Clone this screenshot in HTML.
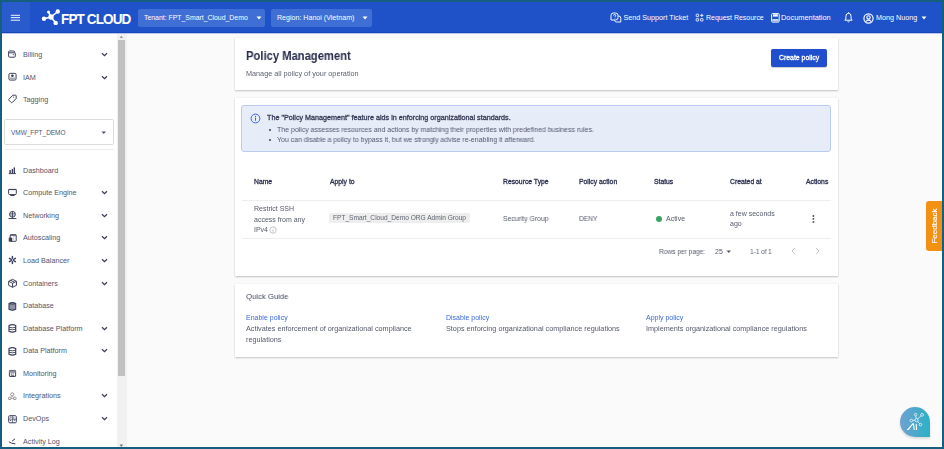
<!DOCTYPE html>
<html><head><meta charset="utf-8">
<style>
*{margin:0;padding:0;box-sizing:border-box}
html,body{width:944px;height:449px;overflow:hidden;background:#165e80;font-family:"Liberation Sans",sans-serif}
.a{position:absolute;white-space:nowrap;line-height:normal}
#frame{position:absolute;left:2px;top:2px;width:940px;height:445px;background:#fafafa;overflow:hidden}
#hdr{position:absolute;left:0;top:0;width:940px;height:31px;background:#1f52c8;border-bottom:1px solid #1746b8}
#burger{position:absolute;left:0;top:0;width:28px;height:30px;background:#2a5bcc}
.hl{position:absolute;left:9px;width:9px;height:1px;background:#e8eefc}
.dd{position:absolute;top:6.5px;height:18px;background:#3f6ed5;border-radius:2px}
.ht{color:#fff;font-size:7.2px}
#side{position:absolute;left:0;top:31px;width:115px;height:414px;background:#fff}
.si{position:absolute;left:21.4px;font-size:7.6px;color:#50556c;white-space:nowrap;transform:scaleX(0.947);transform-origin:0 0}
.ic{position:absolute;left:6px}
.chev{position:absolute;left:99px}
.card{position:absolute;left:233px;width:603px;background:#fff;box-shadow:0 1px 1.5px rgba(0,0,0,.2),0 0 2px rgba(0,0,0,.07)}
.th{position:absolute;font-size:6.8px;font-weight:normal;-webkit-text-stroke:0.3px #2b3050;color:#2b3050;white-space:nowrap}
.td{position:absolute;font-size:7px;color:#555a6a;white-space:nowrap;line-height:10.7px}
.card~.a,.th,.td{will-change:transform}</style></head><body>
<div id="frame">
  <div id="hdr">
    <div id="burger">
      <svg class="a" style="left:0;top:0" width="28" height="30"><g fill="#e8eefc"><rect x="8.8" y="12.8" width="9.2" height="1.05"/><rect x="8.8" y="15.1" width="9.2" height="1.05"/><rect x="8.8" y="17.7" width="9.2" height="1.05"/></g></svg>
    </div>
    <!-- logo -->
    <svg class="a" style="left:39px;top:6.2px" width="20" height="17" viewBox="0 0 20 17">
      <g stroke="#fff" stroke-width="1.6" fill="none">
        <line x1="10" y1="9" x2="3" y2="10.8"/>
        <line x1="10" y1="9" x2="7.5" y2="4"/>
        <line x1="10" y1="9" x2="16.8" y2="3.5"/>
        <line x1="10" y1="9" x2="14.7" y2="15"/>
      </g>
      <g fill="#fff">
        <circle cx="10" cy="9" r="2.7"/>
        <circle cx="3" cy="10.8" r="2.2"/>
        <circle cx="7.5" cy="4" r="1.5"/>
        <circle cx="16.8" cy="3.5" r="2.2"/>
        <circle cx="14.7" cy="15" r="2.2"/>
      </g>
    </svg>
    <div class="a" style="left:58.6px;top:8.7px;font-size:14px;font-weight:bold;color:#fff;letter-spacing:-0.9px;transform:scaleX(0.965);transform-origin:0 0">FPT CLOUD</div>
    <div class="dd" style="left:136px;width:127px"></div>
    <div class="a ht" style="left:141.8px;top:11px;transform:scaleX(0.958);transform-origin:0 0">Tenant: FPT_Smart_Cloud_Demo</div>
    <svg class="a" style="left:254px;top:14px" width="6" height="4"><path d="M0.5 0.5h5l-2.5 3z" fill="#fff"/></svg>
    <div class="dd" style="left:269px;width:100.5px"></div>
    <div class="a ht" style="left:274.5px;top:11px;transform:scaleX(0.985);transform-origin:0 0">Region: Hanoi (Vietnam)</div>
    <svg class="a" style="left:360px;top:14px" width="6" height="4"><path d="M0.5 0.5h5l-2.5 3z" fill="#fff"/></svg>

    <!-- right header -->
    <svg class="a" style="left:608px;top:10px" width="12" height="11" viewBox="0 0 12 11" fill="none" stroke="#fff" stroke-width="0.95">
      <path d="M3.3 1h2.3a2.4 2.4 0 0 1 2.4 2.4v2.2a2.4 2.4 0 0 1-2.4 2.4h-4.6v-4.6a2.4 2.4 0 0 1 2.3-2.4z"/>
      <path d="M8.3 3.9a2.4 2.4 0 0 1 2.5 2.4v3.7h-4.2a2.4 2.4 0 0 1-2.2-1.7"/>
      <path d="M3.5 3.5a1.1 1.1 0 1 1 1.5 1v0.8"/><circle cx="5" cy="6.6" r="0.35" fill="#fff" stroke="none"/>
    </svg>
    <div class="a ht" style="left:621.5px;top:11px">Send Support Ticket</div>
    <svg class="a" style="left:693px;top:11px" width="9" height="9" viewBox="0 0 9 9" fill="none" stroke="#fff" stroke-width="0.9">
      <rect x="1.2" y="1.2" width="2.4" height="2.4" rx="0.2" stroke-width="0.8"/><rect x="1.2" y="5.6" width="2.4" height="2.4" rx="0.2" stroke-width="0.8"/><rect x="5.6" y="5.6" width="2.4" height="2.4" rx="0.2" stroke-width="0.8"/>
      <path d="M6.8 0.8v3.2M5.2 2.4h3.2" stroke-width="0.85"/>
    </svg>
    <div class="a ht" style="left:704px;top:11px;transform:scaleX(0.97);transform-origin:0 0">Request Resource</div>
    <svg class="a" style="left:769px;top:11px" width="9" height="10" viewBox="0 0 9 10" fill="none" stroke="#fff" stroke-width="1">
      <rect x="0.6" y="0.6" width="7.6" height="8.5" rx="1"/>
      <rect x="2" y="1.3" width="4.8" height="2.3" fill="#fff" stroke="none"/>
      <rect x="1.3" y="6" width="6.2" height="2.3" fill="rgba(255,255,255,0.75)" stroke="none"/>
    </svg>
    <div class="a ht" style="left:779px;top:11px;font-size:7.4px">Documentation</div>
    <svg class="a" style="left:841.5px;top:10px" width="9" height="11" viewBox="0 0 9 11" fill="none" stroke="#fff" stroke-width="1">
      <path d="M4.5 1.3q-2.6 0-2.6 3v2.6l-1.1 1.3h7.4l-1.1-1.3v-2.6q0-3-2.6-3z"/><path d="M3.5 9.3q1 1.2 2 0"/><path d="M4.5 0.3v1"/>
    </svg>
    <svg class="a" style="left:861px;top:10.5px" width="11" height="11" viewBox="0 0 11 11" fill="none" stroke="#fff" stroke-width="1">
      <circle cx="5.5" cy="5.5" r="4.6" stroke-width="1.15"/><circle cx="5.5" cy="4.4" r="1.7" stroke-width="1.1"/><path d="M2.6 8.6q2.9-3 5.8 0" stroke-width="1.1"/>
    </svg>
    <div class="a ht" style="left:874px;top:11px">Mong Nuong</div>
    <svg class="a" style="left:918.5px;top:14px" width="6" height="4"><path d="M0.5 0.5h5l-2.5 3z" fill="#fff"/></svg>
  </div>

  <div id="side">
<div class="si" style="top:17.2px">Billing</div>
<svg class="ic" style="top:16.7px" width="10" height="10" viewBox="0 0 10 10"><path d="M1.6 1h4a1 1 0 0 1 1 1v0.6h0.1a0.7 0.7 0 0 1 0.6 0.7v2.9a1 1 0 0 1-1 1h-4.7a1 1 0 0 1-1-1v-4.2a1 1 0 0 1 1-1z" stroke="#3a3f5a" fill="none" stroke-width="1" stroke-width="1.1"/><path d="M0.8 2.8h6" stroke="#3a3f5a" fill="none" stroke-width="1" stroke-width="1.1"/><circle cx="5.3" cy="4.6" r="0.6" fill="#3a3f5a"/></svg>
<svg class="chev" style="top:19.2px" width="7" height="5" viewBox="0 0 7 5"><path d="M1 1.2l2.5 2.4l2.5-2.4" fill="none" stroke="#3a3f5a" stroke-width="1.3"/></svg>
<div class="si" style="top:39.5px">IAM</div>
<svg class="ic" style="top:39.0px" width="10" height="10" viewBox="0 0 10 10"><rect x="0.95" y="1.35" width="7.1" height="6.7" rx="1.2" stroke="#3a3f5a" fill="none" stroke-width="1" stroke-width="1.1"/><circle cx="4.4" cy="3.8" r="1.3" fill="#3a3f5a"/><rect x="2" y="5.6" width="5" height="1.3" fill="#9a9db0"/></svg>
<svg class="chev" style="top:41.5px" width="7" height="5" viewBox="0 0 7 5"><path d="M1 1.2l2.5 2.4l2.5-2.4" fill="none" stroke="#3a3f5a" stroke-width="1.3"/></svg>
<div class="si" style="top:61.8px">Tagging</div>
<svg class="ic" style="top:61.3px" width="10" height="10" viewBox="0 0 10 10"><path d="M0.9 5.2l4-4h2.7a0.6 0.6 0 0 1 0.6 0.6v2.7l-4 4a0.7 0.7 0 0 1-1 0l-2.3-2.3a0.7 0.7 0 0 1 0-1z" stroke="#3a3f5a" fill="none" stroke-width="1" stroke-width="0.95" stroke-linejoin="round"/><circle cx="5.6" cy="3" r="0.55" fill="#3a3f5a"/></svg>
<div class="a" style="left:2.3px;top:86.3px;width:109.3px;height:26px;border:1px solid #dcdcdc;border-radius:2px;background:#fff"></div>
<div class="si" style="left:9.2px;top:95.2px;transform:scaleX(0.85);transform-origin:0 0">VMW_FPT_DEMO</div>
<svg class="a" style="left:98.6px;top:97.8px" width="6" height="4"><path d="M0.5 0.5h4.5l-2.25 2.5z" fill="#50556c"/></svg>
<div class="a" style="left:2.7px;top:115.6px;width:109px;height:1px;background:#ececec"></div>
<div class="si" style="top:132.6px">Dashboard</div>
<svg class="ic" style="top:132.1px" width="10" height="10" viewBox="0 0 10 10"><rect x="1.4" y="5" width="1.4" height="3.1" fill="#3a3f5a"/><rect x="3.7" y="3.9" width="1.3" height="4.2" fill="#3a3f5a"/><rect x="5.6" y="2.4" width="1.4" height="5.7" fill="#3a3f5a"/><rect x="0.75" y="8.1" width="7.1" height="1" fill="#3a3f5a"/></svg>
<div class="si" style="top:155.2px">Compute Engine</div>
<svg class="ic" style="top:154.7px" width="10" height="10" viewBox="0 0 10 10"><path d="M1.3 1.4h6.3a0.7 0.7 0 0 1 0.7 0.7v3.3a1.2 1.2 0 0 1-1.2 1.2h-5.3a1.2 1.2 0 0 1-1.2-1.2v-3.3a0.7 0.7 0 0 1 0.7-0.7z" stroke="#3a3f5a" fill="none" stroke-width="1" stroke-width="1.2"/><path d="M0.6 1.6h7.7" stroke="#3a3f5a" fill="none" stroke-width="1" stroke-width="1.6"/><path d="M2.4 7.5h4.1" stroke="#3a3f5a" fill="none" stroke-width="1" stroke-width="1.1"/><circle cx="4.45" cy="7.2" r="0.7" fill="#3a3f5a"/></svg>
<svg class="chev" style="top:157.2px" width="7" height="5" viewBox="0 0 7 5"><path d="M1 1.2l2.5 2.4l2.5-2.4" fill="none" stroke="#3a3f5a" stroke-width="1.3"/></svg>
<div class="si" style="top:177.8px">Networking</div>
<svg class="ic" style="top:177.3px" width="10" height="10" viewBox="0 0 10 10"><circle cx="4.45" cy="4.3" r="2.9" stroke="#3a3f5a" fill="none" stroke-width="1" stroke-width="1.1"/><path d="M1.8 3.6h5.3M1.8 5h5.3" stroke="#3a3f5a" stroke-width="0.6" fill="none"/><path d="M4.45 1.4v5.8" stroke="#3a3f5a" stroke-width="0.9" fill="none"/><path d="M4.45 7.2v1.3M0.5 8.55h7.9" stroke="#3a3f5a" fill="none" stroke-width="1" stroke-width="1"/></svg>
<svg class="chev" style="top:179.8px" width="7" height="5" viewBox="0 0 7 5"><path d="M1 1.2l2.5 2.4l2.5-2.4" fill="none" stroke="#3a3f5a" stroke-width="1.3"/></svg>
<div class="si" style="top:200.3px">Autoscaling</div>
<svg class="ic" style="top:199.8px" width="10" height="10" viewBox="0 0 10 10"><rect x="2.2" y="1.8" width="6" height="6.5" rx="0.5" stroke="#3a3f5a" fill="none" stroke-width="1"/><path d="M2.2 2.1h6" stroke="#3a3f5a" fill="none" stroke-width="1" stroke-width="1.3"/><rect x="0.75" y="4.6" width="3.5" height="4" fill="#3a3f5a"/><path d="M5 3.6h2M5.7 4.6v2.4" stroke="#b8bac6" stroke-width="0.8"/></svg>
<svg class="chev" style="top:202.3px" width="7" height="5" viewBox="0 0 7 5"><path d="M1 1.2l2.5 2.4l2.5-2.4" fill="none" stroke="#3a3f5a" stroke-width="1.3"/></svg>
<div class="si" style="top:222.9px">Load Balancer</div>
<svg class="ic" style="top:222.4px" width="10" height="10" viewBox="0 0 10 10"><g stroke="#3a3f5a" stroke-width="1.5" stroke-linecap="round"><path d="M4.4 1.6v1.5M4.4 6.9v1.5M1.45 3.3l1.3 0.75M6.05 5.95l1.3 0.75M1.45 6.7l1.3-0.75M6.05 4.05l1.3-0.75"/></g><circle cx="4.4" cy="5" r="1.2" stroke="#3a3f5a" fill="none" stroke-width="1" stroke-width="0.8"/></svg>
<svg class="chev" style="top:224.9px" width="7" height="5" viewBox="0 0 7 5"><path d="M1 1.2l2.5 2.4l2.5-2.4" fill="none" stroke="#3a3f5a" stroke-width="1.3"/></svg>
<div class="si" style="top:245.5px">Containers</div>
<svg class="ic" style="top:245.0px" width="10" height="10" viewBox="0 0 10 10"><path d="M4.55 1.3l3.9 2v4l-3.9 2l-3.9-2v-4z" stroke="#3a3f5a" fill="none" stroke-width="1" stroke-width="1.1" stroke-linejoin="round"/><path d="M0.9 3.4l3.65 1.9l3.65-1.9M4.55 5.3v3.8M2.7 2.3l3.6 1.9" stroke="#3a3f5a" fill="none" stroke-width="1" stroke-width="0.9"/></svg>
<svg class="chev" style="top:247.5px" width="7" height="5" viewBox="0 0 7 5"><path d="M1 1.2l2.5 2.4l2.5-2.4" fill="none" stroke="#3a3f5a" stroke-width="1.3"/></svg>
<div class="si" style="top:268.1px">Database</div>
<svg class="ic" style="top:267.6px" width="10" height="10" viewBox="0 0 10 10"><path d="M1 2.5q3.35-1.8 6.7 0v5.8q-3.35 1.8-6.7 0z" fill="#8f92a6" stroke="#3a3f5a" stroke-width="1.1"/><path d="M1.1 2.6q3.25 1.4 6.5 0" stroke="#3a3f5a" stroke-width="0.9" fill="none"/></svg>
<div class="si" style="top:290.7px">Database Platform</div>
<svg class="ic" style="top:290.2px" width="10" height="10" viewBox="0 0 10 10"><path d="M1 2.5q3.35-1.8 6.7 0v5.8q-3.35 1.8-6.7 0z" fill="none" stroke="#3a3f5a" stroke-width="1.2"/><path d="M1.1 4.3q3.25 1 6.5 0M1.1 6.3q3.25 1 6.5 0" stroke="#3a3f5a" stroke-width="0.9" fill="none"/></svg>
<svg class="chev" style="top:292.7px" width="7" height="5" viewBox="0 0 7 5"><path d="M1 1.2l2.5 2.4l2.5-2.4" fill="none" stroke="#3a3f5a" stroke-width="1.3"/></svg>
<div class="si" style="top:313.2px">Data Platform</div>
<svg class="ic" style="top:312.7px" width="10" height="10" viewBox="0 0 10 10"><path d="M1 2.5q3.35-1.8 6.7 0v5.8q-3.35 1.8-6.7 0z" fill="none" stroke="#3a3f5a" stroke-width="1.2"/><path d="M1.1 4.3q3.25 1 6.5 0M1.1 6.3q3.25 1 6.5 0" stroke="#3a3f5a" stroke-width="0.9" fill="none"/></svg>
<svg class="chev" style="top:315.2px" width="7" height="5" viewBox="0 0 7 5"><path d="M1 1.2l2.5 2.4l2.5-2.4" fill="none" stroke="#3a3f5a" stroke-width="1.3"/></svg>
<div class="si" style="top:335.8px">Monitoring</div>
<svg class="ic" style="top:335.3px" width="10" height="10" viewBox="0 0 10 10"><rect x="1.4" y="2.45" width="6.2" height="6" rx="0.4" stroke="#3a3f5a" fill="none" stroke-width="1" stroke-width="1"/><rect x="1.4" y="2.45" width="6.2" height="2.4" fill="#8f92a6"/><path d="M3.3 5.2v2.2h2.9M5.1 4.8v1.6" stroke="#3a3f5a" stroke-width="0.7" fill="none"/></svg>
<div class="si" style="top:358.4px">Integrations</div>
<svg class="ic" style="top:357.9px" width="10" height="10" viewBox="0 0 10 10"><circle cx="4.2" cy="3.4" r="1.6" fill="none" stroke="#8a8a8a" stroke-width="0.9"/><rect x="0.6" y="6.2" width="2.4" height="2.3" rx="0.4" fill="none" stroke="#8a8a8a" stroke-width="0.9"/><rect x="5.6" y="6.2" width="2.4" height="2.3" rx="0.4" fill="none" stroke="#8a8a8a" stroke-width="0.9"/><path d="M4.2 5v1.2M3 7.3h2.6" stroke="#8a8a8a" stroke-width="0.8"/></svg>
<svg class="chev" style="top:360.4px" width="7" height="5" viewBox="0 0 7 5"><path d="M1 1.2l2.5 2.4l2.5-2.4" fill="none" stroke="#3a3f5a" stroke-width="1.3"/></svg>
<div class="si" style="top:381.0px">DevOps</div>
<svg class="ic" style="top:380.5px" width="10" height="10" viewBox="0 0 10 10"><rect x="0.7" y="1.7" width="7.6" height="7.1" rx="1" stroke="#3a3f5a" fill="none" stroke-width="1" stroke-width="1.1"/><path d="M4.6 1.7v7.1M0.7 5.2h7.6" stroke="#3a3f5a" stroke-width="0.7"/><path d="M2 3.2h1.5M2 6.6h1.2M5.8 3.3v1M5.8 6.2h1.3" stroke="#3a3f5a" stroke-width="0.9"/></svg>
<svg class="chev" style="top:383.0px" width="7" height="5" viewBox="0 0 7 5"><path d="M1 1.2l2.5 2.4l2.5-2.4" fill="none" stroke="#3a3f5a" stroke-width="1.3"/></svg>
<div class="si" style="top:403.6px">Activity Log</div>
<svg class="ic" style="top:403.1px" width="10" height="10" viewBox="0 0 10 10"><path d="M4.3 5l2.4-1.9" stroke="#3a3f5a" fill="none" stroke-width="1" stroke-width="1.3" stroke-linecap="round"/><path d="M1.2 6q2.5 1.8 5.8 1.8" stroke="#3a3f5a" fill="none" stroke-width="1" stroke-width="1.1" stroke-linecap="round"/></svg>
</div>

  <!-- scrollbar -->
  <div class="a" style="left:115px;top:31px;width:9.6px;height:414px;background:#f1f1f1"></div>
  <div class="a" style="left:116px;top:37.7px;width:7px;height:336.3px;background:#c1c1c1"></div>
  <svg class="a" style="left:117.4px;top:32.6px" width="5" height="4"><path d="M0.6 3.1h3.5l-1.75-2.3z" fill="#9a9a9a"/></svg>
  <svg class="a" style="left:117.4px;top:441.5px" width="5" height="4"><path d="M0.6 0.6h3.5l-1.75 2.3z" fill="#707070"/></svg>

  <div class="a" style="left:0;top:31px;width:940px;height:1px;background:#b9c7ee"></div>
  <!-- card 1 -->
  <div class="card" style="top:35.5px;height:52px"></div>
  <div class="a" style="left:243.5px;top:47px;font-size:12px;font-weight:bold;color:#262b4a;transform:scaleX(0.935);transform-origin:0 0">Policy Management</div>
  <div class="a" style="left:244px;top:66.5px;font-size:7.2px;color:#5a5f6e;transform:scaleX(1.01);transform-origin:0 0">Manage all policy of your operation</div>
  <div class="a" style="left:768.7px;top:47.1px;width:56.3px;height:18.3px;background:#1f4fcc;border-radius:2px;box-shadow:0 0.5px 1px rgba(0,0,0,.2)"></div>
  <div class="a" style="left:776.6px;top:52px;font-size:6.9px;font-weight:normal;-webkit-text-stroke:0.3px #fff;color:#fff;transform:scaleX(1);transform-origin:0 0">Create policy</div>

  <!-- card 2 -->
  <div class="card" style="top:96px;height:178px"></div>
  <div class="a" style="left:239px;top:103px;width:590px;height:46.5px;background:#e7edf8;border:1px solid #b9cbef;border-radius:3px"></div>
  <svg class="a" style="left:248px;top:111px" width="11" height="11" viewBox="0 0 11 11">
    <circle cx="5.5" cy="5.5" r="4.4" fill="none" stroke="#3a66d8" stroke-width="1"/>
    <rect x="5" y="4.6" width="1" height="3.2" fill="#3a66d8"/><circle cx="5.5" cy="3.4" r="0.6" fill="#3a66d8"/>
  </svg>
  <div class="a" style="left:265px;top:111px;font-size:7.2px;font-weight:normal;-webkit-text-stroke:0.3px #343a55;color:#343a55;transform:scaleX(1.0);transform-origin:0 0">The "Policy Management" feature aids in enforcing organizational standards.</div>
  <div class="a" style="left:267.4px;top:127.2px;width:2.2px;height:2.2px;border-radius:50%;background:#3a3f5a"></div>
  <div class="a" style="left:275px;top:124px;font-size:7px;color:#50556c;transform:scaleX(0.991);transform-origin:0 0">The policy assesses resources and actions by matching their properties with predefined business rules.</div>
  <div class="a" style="left:267.4px;top:137.2px;width:2.2px;height:2.2px;border-radius:50%;background:#3a3f5a"></div>
  <div class="a" style="left:275px;top:134px;font-size:7px;color:#50556c;transform:scaleX(0.99);transform-origin:0 0">You can disable a policy to bypass it, but we strongly advise re-enabling it afterward.</div>

  <!-- table -->
  <div class="th" style="left:252px;top:175.7px">Name</div>
  <div class="th" style="left:327.5px;top:175.7px">Apply to</div>
  <div class="th" style="left:500.8px;top:175.7px">Resource Type</div>
  <div class="th" style="left:576.8px;top:175.7px">Policy action</div>
  <div class="th" style="left:652.4px;top:175.7px">Status</div>
  <div class="th" style="left:728px;top:175.7px">Created at</div>
  <div class="th" style="left:804.3px;top:175.7px">Actions</div>
  <div class="a" style="left:240px;top:197.5px;width:589px;height:1px;background:#eeeeee"></div>
  <div class="td" style="left:252px;top:201.8px">Restrict SSH<br>access from any<br>IPv4</div>
  <svg class="a" style="left:267px;top:224px" width="8" height="8" viewBox="0 0 8 8"><circle cx="4" cy="4" r="3.2" fill="none" stroke="#aaa" stroke-width="0.7"/><rect x="3.65" y="3.4" width="0.7" height="2.4" fill="#aaa"/></svg>
  <div class="a" style="left:327.3px;top:210.8px;width:140.7px;height:9.7px;background:#eeeeee;border-radius:2px"></div>
  <div class="a" style="left:331px;top:212px;font-size:6.6px;color:#5f6370">FPT_Smart_Cloud_Demo ORG Admin Group</div>
  <div class="td" style="left:500.8px;top:212.3px;transform:scaleX(0.975);transform-origin:0 0">Security Group</div>
  <div class="td" style="left:576.8px;top:212.3px;transform:scaleX(0.95);transform-origin:0 0">DENY</div>
  <div class="a" style="left:654px;top:214px;width:6.4px;height:6.4px;border-radius:50%;background:#3aa562"></div>
  <div class="td" style="left:664px;top:212.3px">Active</div>
  <div class="td" style="left:728px;top:207.2px;line-height:9.6px">a few seconds<br>ago</div>
  <svg class="a" style="left:808px;top:210px" width="7" height="14" viewBox="0 0 7 14" fill="#505050"><circle cx="3.4" cy="4" r="0.95"/><circle cx="3.4" cy="6.9" r="0.95"/><circle cx="3.4" cy="9.9" r="0.95"/></svg>
  <div class="a" style="left:240px;top:235.5px;width:589px;height:1px;background:#eeeeee"></div>

  <div class="td" style="left:657px;top:244.7px;transform:scaleX(0.94);transform-origin:0 0">Rows per page:</div>
  <div class="td" style="left:712.5px;top:244.7px">25</div>
  <svg class="a" style="left:723.5px;top:248px" width="6" height="4"><path d="M0.5 0.5h4.5l-2.25 2.5z" fill="#555a6a"/></svg>
  <div class="td" style="left:748px;top:244.7px;transform:scaleX(0.92);transform-origin:0 0">1-1 of 1</div>
  <svg class="a" style="left:788.8px;top:245px" width="5" height="8" viewBox="0 0 5 8"><path d="M4 0.8L1 4l3 3.2" fill="none" stroke="#b5b8c0" stroke-width="0.9"/></svg>
  <svg class="a" style="left:812.8px;top:245px" width="5" height="8" viewBox="0 0 5 8"><path d="M1 0.8L4 4l-3 3.2" fill="none" stroke="#b5b8c0" stroke-width="0.9"/></svg>

  <!-- card 3 -->
  <div class="card" style="top:282px;height:72.6px"></div>
  <div class="a" style="left:243.8px;top:289.5px;font-size:8px;color:#444a5f;transform:scaleX(0.965);transform-origin:0 0">Quick Guide</div>
  <div class="a" style="left:243.8px;top:311.5px;font-size:7px;color:#3a6ad8">Enable policy</div>
  <div class="td" style="left:243.8px;top:321.3px;font-size:7.25px;line-height:11px">Activates enforcement of organizational compliance<br>regulations</div>
  <div class="a" style="left:444px;top:311.5px;font-size:7px;color:#3a6ad8">Disable policy</div>
  <div class="td" style="left:444px;top:321.3px;font-size:7.25px;line-height:11px">Stops enforcing organizational compliance regulations</div>
  <div class="a" style="left:644px;top:311.5px;font-size:7px;color:#3a6ad8">Apply policy</div>
  <div class="td" style="left:644px;top:321.3px;font-size:7.25px;line-height:11px">Implements organizational compliance regulations</div>

  <!-- feedback -->
  <div class="a" style="left:923.5px;top:198.5px;width:17px;height:49.5px;background:#f29112;border-radius:3px 0 0 3px"></div>
  <div class="a" style="left:912.6px;top:218.6px;width:40px;height:10px;font-size:8px;color:#fff;-webkit-text-stroke:0.2px #fff;transform:rotate(-90deg);transform-origin:50% 50%;text-align:center;line-height:10px">Feedback</div>

  <!-- AI button -->
  <div class="a" style="left:897.9px;top:404.9px;width:30.4px;height:29.9px;border-radius:15px 15px 0 15px;background:linear-gradient(90deg,#70a0d0,#2bb1c7);box-shadow:0 1.5px 2.5px rgba(0,0,0,.15)"></div>
  <svg class="a" style="left:897.9px;top:404.9px" width="31" height="30" viewBox="0 0 31 30">
    <g stroke="#fff" stroke-width="0.85" fill="none" opacity="0.85">
      <path d="M16.5 13.1L15.6 7.6M16.5 13.1L22.1 7.8M16.5 13.1L11.3 13.5M16.5 13.1L20.5 17.6"/>
      <circle cx="16.5" cy="13.1" r="1.6" fill="#4aa6cc"/>
      <circle cx="15.6" cy="7.6" r="1.3" fill="#4aa6cc"/>
      <circle cx="22.1" cy="7.8" r="1.4" fill="#40aacb"/>
      <circle cx="11.3" cy="13.5" r="1.3" fill="#52a2cf"/>
      <circle cx="20.5" cy="17.6" r="1.3" fill="#40aacb"/>
    </g>
    <path d="M6.6 22.9L12.6 16.2h1.3L8.6 22.9z M13 17.2l0.9-0.9l0.9 6.6h-1.1z M15.6 17l1.1-0.3l0.4 6.2h-1.1z" fill="#fff"/>
  </svg>
</div>
</body></html>
